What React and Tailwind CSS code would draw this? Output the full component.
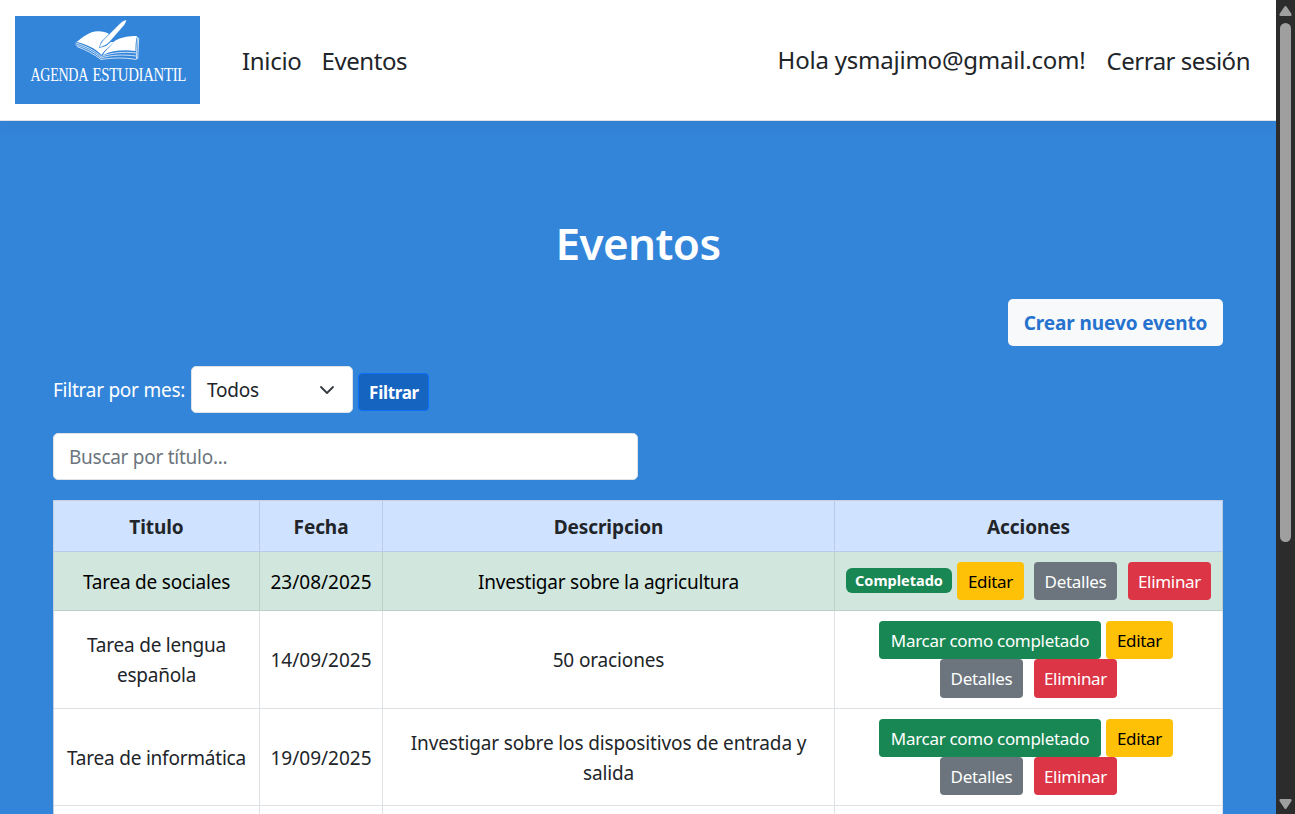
const rows = [
  { title: ["Tarea de sociales"], date: "23/08/2025", text: ["Investigar sobre la agricultura"], done: true, h: "h-[59px]", pad: "pt-[2px]" },
  { title: ["Tarea de lengua", "española"], date: "14/09/2025", text: ["50 oraciones"], done: false, h: "h-[98px]", pad: "pt-0", tall: true },
  { title: ["Tarea de informática"], date: "19/09/2025", text: ["Investigar sobre los dispositivos de entrada y", "salida"], done: false, h: "h-[97px]", pad: "pt-[2px]" },
];

const columns = "grid grid-cols-[206px_123px_452px_388px]";
const button = "flex shrink-0 items-center justify-center rounded-[4px] pt-px text-[17px] tracking-[-0.3px]";

function Logo() {
  return (
    <svg className="block h-[88px] w-[185px] shrink-0 bg-[#3385da]" viewBox="0 0 185 88">
      <path fill="#fff" d="M61.500 26 C68 21 74 15.500 83 15.200 C88 15.200 91 16 94 18 L86 26 L84 32 L91 30 L96 26 L99 26 C96 30 89 34 86.500 39 C80 32 71 28 61.500 26Z" />
      <path fill="#fff" d="M88 39 C90 34 97 30 99.500 25 C106 21 114 20 122 20 C120.500 25 120.500 30 120.500 35 C108 33.500 97 34.500 88 39Z" />
      <path fill="#fff" stroke="#3385da" strokeWidth="0.300" d="M84.500 31.500 C85.500 27 88 24.500 91 21.500 L105 7.500 C108 4.500 110 4 111.500 4 C111 6.500 109.500 9 107.500 11 L94 26.500 C91 29.500 88 30 84.500 31.500Z" />
      <path d="M60.500 27 C71 30 79 34 86 40.500 C97 36.500 108 35.500 121 37 M60.500 28.800 C71 31.500 79 36 86 42 C97 38.500 109 38.500 121 40 M62 30.500 C71 34 79 38 86 43.500 C98 41.500 109 41.500 121.500 43.500 M122.700 21 C122 28 121.500 33 121.500 43 M123.700 22 L122.700 43" fill="none" stroke="#fff" strokeWidth="0.75" />
      <g fill="#fff" fontSize="14" fontFamily="'Liberation Serif', serif" transform="translate(0 65) scale(1 1.38)">
        <text x="15.500" y="0" textLength="57.500" lengthAdjust="spacingAndGlyphs">AGENDA</text>
        <text x="77.500" y="0" textLength="93.500" lengthAdjust="spacingAndGlyphs">ESTUDIANTIL</text>
      </g>
    </svg>
  );
}

function Cell({ children, className = "" }) {
  return <div className={`flex flex-col items-center justify-center border-r border-b ${className}`}>{children}</div>;
}

function Actions({ done, tall }) {
  const height = tall ? "h-[39px]" : "h-[38px]";
  const edit = <button className={`${button} h-[38px] w-[67px] bg-[#ffc107] text-black`}>Editar</button>;
  const rest = (
    <div className="flex gap-[11px]">
      <button className={`${button} ${height} w-[83px] bg-[#6c757d] text-white`}>Detalles</button>
      <button className={`${button} ${height} w-[83px] bg-[#dc3545] text-white`}>Eliminar</button>
    </div>
  );
  if (done) {
    return (
      <div className="flex items-center">
        <span className="mr-[5px] mb-px flex h-[25px] w-[106px] items-center justify-center rounded-[6px] bg-[#198754] pb-px text-[14.500px] font-bold text-white">Completado</span>
        {edit}
        <div className="ml-[10px]">{rest}</div>
      </div>
    );
  }
  return (
    <div className="flex flex-col items-center pr-[5px]">
      <div className="flex gap-[5px]">
        <button className={`${button} h-[38px] w-[222px] bg-[#198754] text-white`}>Marcar como completado</button>
        {edit}
      </div>
      <div className="pl-[5px]">{rest}</div>
    </div>
  );
}

export default function App() {
  return (
    <div className="flex h-[814px] w-[1295px] overflow-hidden bg-[#3385da] font-['Noto_Sans','Open_Sans',sans-serif] text-[19px] leading-[30px] whitespace-nowrap text-[#212529]">
      <div className="flex w-[1276px] shrink-0 flex-col">
        <nav className="flex h-[121px] shrink-0 items-start border-b border-[#dee2e6] bg-white pt-4 pr-[26px] pl-[15px] text-[24px] tracking-[-0.3px] shadow-[0_5px_15px_rgba(0,0,0,0.05)]">
          <Logo />
          <div className="ml-[42px] flex gap-[20px] pt-[30px]">
            <a>Inicio</a>
            <a className="tracking-[-0.45px]">Eventos</a>
          </div>
          <div className="ml-auto flex gap-[21px] pt-[30px]">
            <span className="-mt-px tracking-[-0.22px]">Hola ysmajimo@gmail.com!</span>
            <a className="tracking-[-0.48px]">Cerrar sesión</a>
          </div>
        </nav>
        <main className="flex flex-col px-[53px] pt-[92px]">
          <h1 className="h-[61px] text-center text-[44px] leading-[60px] font-semibold tracking-[-0.6px] text-white">Eventos</h1>
          <button className="mt-[25px] flex h-[47px] w-[215px] items-center justify-center self-end rounded-[5px] bg-[#f8f9fa] font-bold tracking-[-0.1px] text-[#2673cf]">Crear nuevo evento</button>
          <div className="mt-[20px] flex h-[47px] items-center">
            <label className="w-[138px] tracking-[-0.25px] text-white">Filtrar por mes:</label>
            <div className="flex h-[47px] w-[162px] items-center justify-between rounded-[5px] border border-[#dee2e6] bg-white pr-[17px] pl-[15px]">
              <span className="tracking-[-0.2px]">Todos</span>
              <svg className="h-4 w-4" viewBox="0 0 16 16" fill="none" stroke="#343a40" strokeWidth="1.800" strokeLinecap="round" strokeLinejoin="round">
                <path d="m2 5 6 6 6-6" />
              </svg>
            </div>
            <button className="mt-[5px] ml-[5px] flex h-[38px] w-[71px] items-center justify-center rounded-[4px] border border-[#0d6efd] bg-[#1565c0] pt-[2px] pl-px text-[17px] font-bold tracking-[-0.3px] text-white">Filtrar</button>
          </div>
          <input className="mt-[20px] h-[47px] w-[585px] rounded-[5px] border border-[#dee2e6] bg-white px-[15px] tracking-[-0.27px] placeholder:text-[#6c757d] placeholder:opacity-100" placeholder="Buscar por título..." />
          <section className="mt-[20px] w-[1170px] border-t border-l border-[#c5cfe0] bg-white">
            <div className={`${columns} h-[51px] bg-[#cfe2ff] font-bold tracking-[-0.08px]`}>
              {["Titulo", "Fecha", "Descripcion", "Acciones"].map((name) => (
                <Cell key={name} className="border-[#bacbe6] pt-[2px]">{name}</Cell>
              ))}
            </div>
            {rows.map((row) => {
              const line = row.done ? "border-[#bcd0c7]" : "border-[#dee2e6]";
              return (
                <div key={row.date} className={`${columns} ${row.h} ${row.done ? "bg-[#d1e7dd] text-black" : "bg-white"}`}>
                  <Cell className={`${line} ${row.pad} tracking-[-0.22px]`}>{row.title.map((t) => <div key={t}>{t}</div>)}</Cell>
                  <Cell className={`${line} ${row.pad}`}>{row.date}</Cell>
                  <Cell className={`${line} ${row.pad} ${row.done ? "tracking-[-0.23px]" : "tracking-[-0.14px]"}`}>{row.text.map((t) => <div key={t}>{t}</div>)}</Cell>
                  <Cell className={line}><Actions done={row.done} tall={row.tall} /></Cell>
                </div>
              );
            })}
            <div className={`${columns} h-[60px]`}>
              {[0, 1, 2, 3].map((i) => <Cell key={i} className="border-[#dee2e6]" />)}
            </div>
          </section>
        </main>
      </div>
      <div className="flex h-[814px] w-[19px] shrink-0 flex-col items-center bg-[#2c2c2c]">
        <svg className="mt-[5px] h-[12px] w-[13px] shrink-0" viewBox="0 0 13 12" fill="#9f9f9f"><path d="M5.500 1.500Q6.500 0.500 7.500 1.500L12.500 9Q13 11 11.500 11H1.500Q0 11 0.500 9Z" /></svg>
        <div className="mt-[6px] h-[519px] w-[11px] shrink-0 rounded-full bg-[#9f9f9f]" />
        <svg className="mt-auto mb-[4px] h-[12px] w-[13px] shrink-0" viewBox="0 0 13 12" fill="#9f9f9f"><path d="M5.500 10.500Q6.500 11.500 7.500 10.500L12.500 3Q13 1 11.500 1H1.500Q0 1 0.500 3Z" /></svg>
      </div>
    </div>
  );
}
